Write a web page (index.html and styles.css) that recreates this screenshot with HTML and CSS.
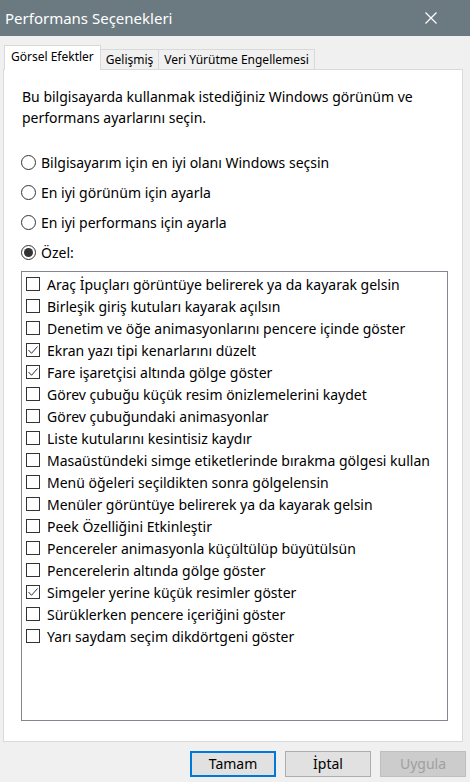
FILE: index.html
```html
<!DOCTYPE html>
<html lang="tr">
<head>
<meta charset="utf-8">
<title>Performans Seçenekleri</title>
<link rel="stylesheet" href="styles.css">
</head>
<body>
<div class="window">
  <div class="titlebar">
    <span class="title">Performans Seçenekleri</span>
    <svg class="close" width="12" height="12" viewBox="0 0 12 12"><path d="M0.5 0.5 L11.5 11.5 M11.5 0.5 L0.5 11.5" stroke="#ffffff" stroke-width="1.2" fill="none"/></svg>
  </div>
  <div class="content">
    <div class="tabs">
      <div class="tab active">Görsel Efektler</div>
      <div class="tab">Gelişmiş</div>
      <div class="tab">Veri Yürütme Engellemesi</div>
    </div>
    <div class="panel">
      <p class="desc">Bu bilgisayarda kullanmak istediğiniz Windows görünüm ve performans ayarlarını seçin.</p>
      <div class="radios">
        <div class="radio-row"><span class="radio"></span><span>Bilgisayarım için en iyi olanı Windows seçsin</span></div>
        <div class="radio-row"><span class="radio"></span><span>En iyi görünüm için ayarla</span></div>
        <div class="radio-row"><span class="radio"></span><span>En iyi performans için ayarla</span></div>
        <div class="radio-row"><span class="radio on"></span><span>Özel:</span></div>
      </div>
      <div class="listbox">
        <div class="item"><span class="cb"></span><span>Araç İpuçları görüntüye belirerek ya da kayarak gelsin</span></div>
        <div class="item"><span class="cb"></span><span>Birleşik giriş kutuları kayarak açılsın</span></div>
        <div class="item"><span class="cb"></span><span>Denetim ve öğe animasyonlarını pencere içinde göster</span></div>
        <div class="item"><span class="cb"><svg viewBox="0 0 14 14" width="14" height="14"><path d="M2.5 7 L5.5 10.3 L11.5 3.5" stroke="#333" stroke-width="1" fill="none"/></svg></span><span>Ekran yazı tipi kenarlarını düzelt</span></div>
        <div class="item"><span class="cb"><svg viewBox="0 0 14 14" width="14" height="14"><path d="M2.5 7 L5.5 10.3 L11.5 3.5" stroke="#333" stroke-width="1" fill="none"/></svg></span><span>Fare işaretçisi altında gölge göster</span></div>
        <div class="item"><span class="cb"></span><span>Görev çubuğu küçük resim önizlemelerini kaydet</span></div>
        <div class="item"><span class="cb"></span><span>Görev çubuğundaki animasyonlar</span></div>
        <div class="item"><span class="cb"></span><span>Liste kutularını kesintisiz kaydır</span></div>
        <div class="item"><span class="cb"></span><span>Masaüstündeki simge etiketlerinde bırakma gölgesi kullan</span></div>
        <div class="item"><span class="cb"></span><span>Menü öğeleri seçildikten sonra gölgelensin</span></div>
        <div class="item"><span class="cb"></span><span>Menüler görüntüye belirerek ya da kayarak gelsin</span></div>
        <div class="item"><span class="cb"></span><span>Peek Özelliğini Etkinleştir</span></div>
        <div class="item"><span class="cb"></span><span>Pencereler animasyonla küçültülüp büyütülsün</span></div>
        <div class="item"><span class="cb"></span><span>Pencerelerin altında gölge göster</span></div>
        <div class="item"><span class="cb"><svg viewBox="0 0 14 14" width="14" height="14"><path d="M2.5 7 L5.5 10.3 L11.5 3.5" stroke="#333" stroke-width="1" fill="none"/></svg></span><span>Simgeler yerine küçük resimler göster</span></div>
        <div class="item"><span class="cb"></span><span>Sürüklerken pencere içeriğini göster</span></div>
        <div class="item"><span class="cb"></span><span>Yarı saydam seçim dikdörtgeni göster</span></div>
      </div>
    </div>
    <div class="buttons">
      <div class="btn default">Tamam</div>
      <div class="btn">İptal</div>
      <div class="btn disabled">Uygula</div>
    </div>
  </div>
</div>
</body>
</html>
```
FILE: styles.css
```css
html, body {
  margin: 0;
  padding: 0;
  background: #f0f0f0;
}
body {
  font-family: "Noto Sans", "Open Sans", sans-serif;
  font-size: 14px;
  color: #000;
}
.window {
  width: 470px;
  height: 782px;
  overflow: hidden;
  display: flex;
  flex-direction: column;
}
.titlebar {
  height: 36px;
  flex: none;
  background: #6b7a81;
  display: flex;
  align-items: center;
  justify-content: space-between;
  padding: 0 33px 0 5px;
}
.title {
  color: #ffffff;
  font-size: 15px;
  padding-bottom: 1px;
}
.close {
  display: block;
}
.content {
  display: flex;
  flex-direction: column;
  padding-top: 9px;
}
.tabs {
  display: flex;
  align-items: flex-end;
  padding-left: 4px;
  height: 24px;
  font-size: 12px;
}
.tab {
  height: 19px;
  line-height: 20px;
  padding: 0 5px 0 5px;
  border: 1px solid #d9d9d9;
  border-bottom: none;
  border-left: none;
  background: #f0f0f0;
  box-sizing: content-box;
}
.tab.active {
  position: relative;
  z-index: 1;
  height: 24px;
  line-height: 22px;
  background: #ffffff;
  border-left: 1px solid #d9d9d9;
  padding: 0 6px 0 6px;
  margin-bottom: -1px;
}
.panel {
  margin: 0 7px 0 3px;
  height: 671px;
  background: #ffffff;
  border: 1px solid #d9d9d9;
  padding: 0 14px 0 17px;
  display: flex;
  flex-direction: column;
}
.desc {
  margin: 16px 0 0 1px;
  line-height: 21px;
  width: 420px;
}
.radios {
  margin-top: 19px;
  display: flex;
  flex-direction: column;
}
.radio-row {
  height: 30px;
  display: flex;
  align-items: center;
  gap: 5px;
}
.radio {
  width: 13px;
  height: 13px;
  border: 1px solid #333;
  border-radius: 50%;
  display: flex;
  align-items: center;
  justify-content: center;
  flex: none;
}
.radio.on::after {
  content: "";
  width: 9px;
  height: 9px;
  border-radius: 50%;
  background: #333;
}
.listbox {
  margin-top: 4px;
  height: 447px;
  border: 1px solid #828790;
  padding: 1px 0 0 4px;
  display: flex;
  flex-direction: column;
}
.item {
  height: 22px;
  display: flex;
  align-items: center;
  gap: 7px;
  white-space: nowrap;
}
.cb {
  width: 14px;
  height: 14px;
  border: 1px solid #333;
  box-sizing: border-box;
  flex: none;
  display: flex;
  align-items: center;
  justify-content: center;
  overflow: hidden;
}
.cb svg {
  flex: none;
}
.buttons {
  display: flex;
  justify-content: flex-end;
  gap: 9px;
  padding: 9px 4px 0 0;
}
.btn {
  width: 84px;
  height: 24px;
  line-height: 24px;
  text-align: center;
  background: #e1e1e1;
  border: 1px solid #adadad;
}
.btn.default {
  border: 2px solid #0078d7;
  width: 82px;
  height: 22px;
  line-height: 22px;
}
.btn.disabled {
  background: #cccccc;
  border-color: #bfbfbf;
  color: #a0a0a0;
}
```
